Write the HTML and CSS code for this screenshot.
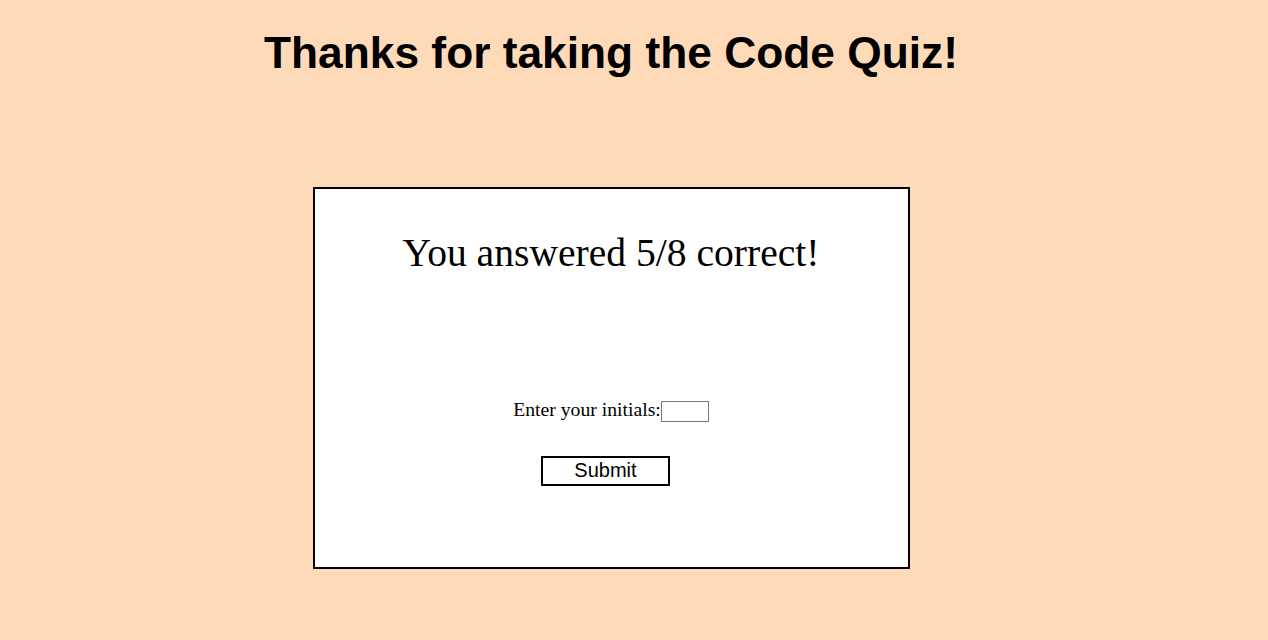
FILE: index.html
```html
<!DOCTYPE html>
<html>
<head>
<meta charset="utf-8">
<link rel="stylesheet" href="styles.css">
</head>
<body>
<main class="page">
  <h1 class="title">Thanks for taking the Code Quiz!</h1>
  <section class="card">
    <p class="score">You answered 5/8 correct!</p>
    <form class="form">
      <label class="label">Enter your initials:<input class="initials" type="text"></label>
      <button class="submit" type="button">Submit</button>
    </form>
  </section>
</main>
</body>
</html>
```
FILE: styles.css
```css
html, body {
  margin: 0;
  padding: 0;
  background: #ffdab9;
}
body {
  font-family: "Liberation Serif", "Times New Roman", serif;
}
.page {
  width: 1222px;
  display: flex;
  flex-direction: column;
  align-items: center;
}
.title {
  font-family: "Liberation Sans", Arial, sans-serif;
  font-weight: bold;
  font-size: 44.3px;
  margin: 26px 0 0;
  line-height: 1.2;
}
.card {
  box-sizing: border-box;
  width: 597px;
  height: 382px;
  margin-top: 108px;
  border: 2px solid #000;
  background: #fff;
  display: flex;
  flex-direction: column;
  align-items: center;
}
.score {
  font-size: 39.6px;
  margin: 42px 0 0;
  line-height: 1.15;
}
.form {
  display: flex;
  flex-direction: column;
  align-items: center;
  margin-top: 120px;
}
.label {
  font-size: 19.7px;
  display: block;
  line-height: 24px;
}
.initials {
  box-sizing: border-box;
  width: 48px;
  height: 21px;
  border: 1px solid #767676;
  padding: 0;
  margin: 0;
  vertical-align: 0;
}
.submit {
  margin: 34px 11px 0 0;
  box-sizing: border-box;
  width: 129px;
  height: 30px;
  border: 2px solid #000;
  background: #fff;
  font-family: "Liberation Sans", Arial, sans-serif;
  font-size: 20px;
  padding: 0;
  color: #000;
}
```
